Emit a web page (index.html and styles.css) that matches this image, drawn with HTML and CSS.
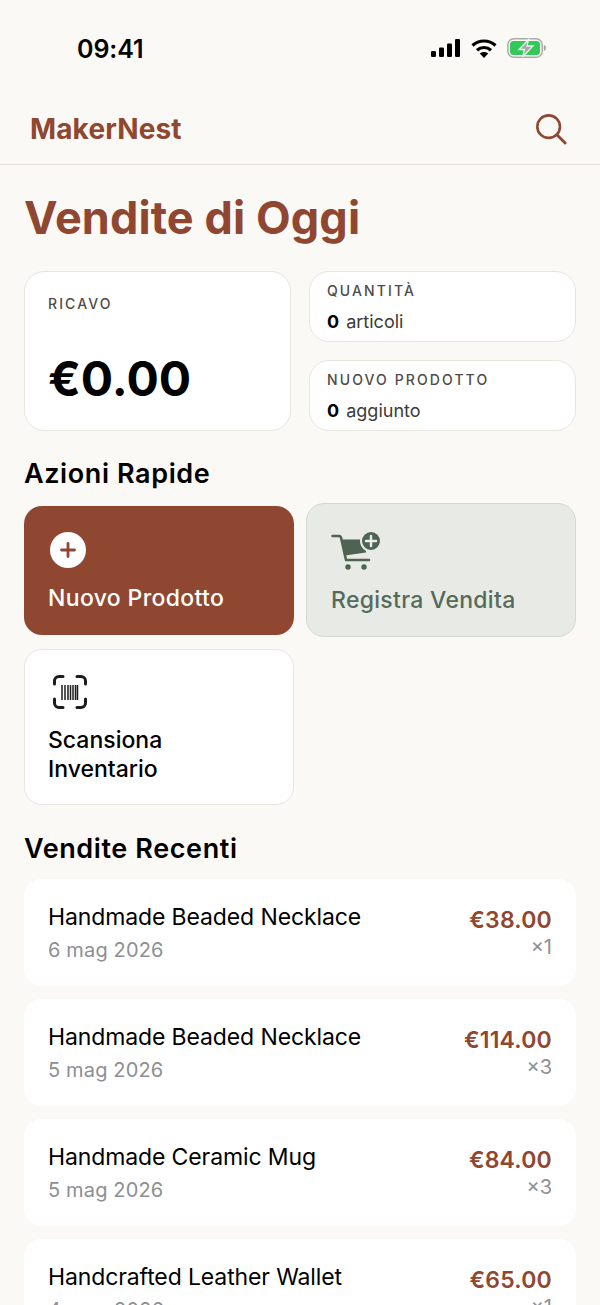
FILE: index.html
```html
<!DOCTYPE html>
<html>
<head>
    <meta charset="UTF-8">
    <title>MakerNest</title>
    <link rel="stylesheet" href="styles.css">
</head>
<body>
    <div class="status-bar">
        <span class="clock">09:41</span>
        <div class="status-icons">
            <svg width="30" height="18" viewBox="0 0 30 18"><rect x="0" y="12" width="5" height="6" rx="1.2"/><rect x="8" y="8.500" width="5" height="9.500" rx="1.2"/><rect x="16" y="4.500" width="5" height="13.500" rx="1.2"/><rect x="24" y="0" width="5" height="18" rx="1.2"/></svg>
            <svg width="26" height="19" viewBox="0 0 26 19"><path d="M1.500 6.500C8 .5 18 .5 24.500 6.500" fill="none" stroke="#000" stroke-width="3.200"/><path d="M6 11.200c4-3.600 10-3.600 14 0" fill="none" stroke="#000" stroke-width="3.200"/><path d="M13 19l-4.200-4.600c2.400-2 6-2 8.400 0z"/></svg>
            <svg width="41" height="20" viewBox="0 0 41 20"><rect x=".8" y=".8" width="34.400" height="18.400" rx="6" fill="none" stroke="#a9aca9" stroke-width="1.500"/><rect x="3" y="3" width="30" height="14" rx="3.500" fill="#34c759"/><path d="M36.800 7v6c1.500-.4 2.400-1.600 2.400-3s-.9-2.600-2.400-3z" fill="#a9aca9"/><path d="M21.500 1.500L12 11.500h5.500L15.500 19 26 8h-6z" fill="#a8a8a8" stroke="#e9f5ea" stroke-width="1.300"/></svg>
        </div>
    </div>

    <header class="nav">
        <span class="brand">MakerNest</span>
        <svg class="search" width="32" height="32" viewBox="0 0 34 34"><circle cx="14.500" cy="14.500" r="12" fill="none" stroke="#8f4731" stroke-width="2.800"/><path d="M23.500 23.500l8.500 8.500" stroke="#8f4731" stroke-width="3" stroke-linecap="round"/></svg>
    </header>

    <main class="content">
        <h1>Vendite di Oggi</h1>

        <section class="stats">
            <div class="card revenue">
                <span class="label">RICAVO</span>
                <span class="amount">€0.00</span>
            </div>
            <div class="stat-side">
                <div class="card mini">
                    <span class="label">QUANTITÀ</span>
                    <span class="mini-value"><b>0</b> articoli</span>
                </div>
                <div class="card mini">
                    <span class="label">NUOVO PRODOTTO</span>
                    <span class="mini-value"><b>0</b> aggiunto</span>
                </div>
            </div>
        </section>

        <h2>Azioni Rapide</h2>
        <section class="actions">
            <div class="action primary">
                <svg width="36" height="36" viewBox="0 0 36 36"><circle cx="18" cy="18" r="18" fill="#fff"/><path d="M18 11.500v13M11.500 18h13" stroke="#8f4731" stroke-width="2.800" stroke-linecap="round"/></svg>
                <span>Nuovo Prodotto</span>
            </div>
            <div class="action muted">
                <svg width="50" height="40" viewBox="0 0 50 40"><path d="M1.500 6H8q1.500 0 2 1.500L15 30h23" fill="none" stroke="#4f6353" stroke-width="2.600" stroke-linecap="round" stroke-linejoin="round"/><path d="M11 9.500h24v13l-21 3z" fill="#4f6353"/><circle cx="17" cy="37" r="2.700" fill="#4f6353"/><circle cx="33" cy="37" r="2.700" fill="#4f6353"/><circle cx="40" cy="11" r="10" fill="#4f6353" stroke="#e7eae5" stroke-width="2"/><path d="M40 6v10M35 11h10" stroke="#e7eae5" stroke-width="2.500" stroke-linecap="round"/></svg>
                <span>Registra Vendita</span>
            </div>
            <div class="action plain">
                <svg width="36" height="36" viewBox="0 0 36 36"><path d="M2.500 10V7A4.500 4.500 0 0 1 7 2.500h4M25 2.500h4A4.500 4.500 0 0 1 33.500 7v3M33.500 25v4a4.500 4.500 0 0 1-4.500 4.500h-4M11 33.500H7A4.500 4.500 0 0 1 2.500 29v-4" fill="none" stroke="#1c1c1e" stroke-width="3" stroke-linecap="round"/><path d="M10 11v15M13 11v15M16 11v15M18.500 11v15M21 11v15M23.500 11v15M25.500 11v15" stroke="#1c1c1e" stroke-width="1.500"/></svg>
                <span>Scansiona<br>Inventario</span>
            </div>
        </section>

        <h2 class="recent-title">Vendite Recenti</h2>
        <section class="sales">
            <div class="sale">
                <div class="sale-info"><span class="sale-name">Handmade Beaded Necklace</span><span class="sale-date">6 mag 2026</span></div>
                <div class="sale-total"><span class="price">€38.00</span><span class="qty">×1</span></div>
            </div>
            <div class="sale">
                <div class="sale-info"><span class="sale-name">Handmade Beaded Necklace</span><span class="sale-date">5 mag 2026</span></div>
                <div class="sale-total"><span class="price">€114.00</span><span class="qty">×3</span></div>
            </div>
            <div class="sale">
                <div class="sale-info"><span class="sale-name">Handmade Ceramic Mug</span><span class="sale-date">5 mag 2026</span></div>
                <div class="sale-total"><span class="price">€84.00</span><span class="qty">×3</span></div>
            </div>
            <div class="sale">
                <div class="sale-info"><span class="sale-name">Handcrafted Leather Wallet</span><span class="sale-date">4 mag 2026</span></div>
                <div class="sale-total"><span class="price">€65.00</span><span class="qty">×1</span></div>
            </div>
        </section>
    </main>
</body>
</html>
```

FILE: styles.css
```css
* {
    margin: 0;
    padding: 0;
    box-sizing: border-box;
}

html, body {
    height: 1305px;
    overflow: hidden;
}

body {
    font-family: Inter, "Liberation Sans", sans-serif;
    background: #fbf9f5;
    color: #000;
}

/* Status bar */
.status-bar {
    height: 99px;
    padding: 34px 52px 0 77px;
    display: flex;
    justify-content: space-between;
    align-items: flex-start;
}

.clock {
    font-size: 25px;
    font-weight: 600;
    line-height: 31px;
    letter-spacing: -0.1px;
}

.status-icons {
    display: flex;
    align-items: center;
    gap: 10px;
    padding-top: 4px;
}

/* Nav */
.nav {
    height: 66px;
    padding: 0 33px 5px 30px;
    display: flex;
    justify-content: space-between;
    align-items: center;
    border-bottom: 1px solid #e2dfd9;
}

.brand {
    font-size: 28px;
    font-weight: 700;
    color: #8f4731;
    letter-spacing: 0.14px;
}

.content {
    padding: 0 24px;
}

h1 {
    font-size: 45px;
    font-weight: 700;
    line-height: 54px;
    color: #8f4731;
    margin-top: 26px;
    letter-spacing: 0.1px;
}

h2 {
    font-size: 27px;
    font-weight: 600;
    line-height: 32px;
    margin-top: 27px;
    letter-spacing: 0.6px;
}

/* Stat cards */
.card {
    background: #fff;
    border: 1px solid #e9e6e0;
    border-radius: 20px;
}

.stats {
    display: grid;
    grid-template-columns: 267px 267px;
    gap: 18px;
    margin-top: 26px;
}

.revenue {
    height: 160px;
    padding: 23px 23px 22px;
    display: flex;
    flex-direction: column;
    justify-content: space-between;
}

.label {
    font-size: 14px;
    font-weight: 500;
    letter-spacing: 2.1px;
    color: #4f4a46;
}

.amount {
    font-size: 48px;
    font-weight: 700;
    line-height: 58px;
}

.stat-side {
    display: flex;
    flex-direction: column;
    gap: 18px;
}

.mini {
    height: 71px;
    padding: 10px 17px;
    display: flex;
    flex-direction: column;
    gap: 12px;
}

.mini-value {
    font-size: 18px;
    color: #3d3a37;
}

.mini-value b {
    color: #000;
    font-weight: 700;
    margin-right: 2px;
}

/* Quick actions */
.actions {
    display: grid;
    grid-template-columns: 270px 270px;
    gap: 12px;
    margin-top: 16px;
}

.action {
    border-radius: 18px;
    height: 129px;
    padding: 26px 24px 0;
    display: flex;
    flex-direction: column;
    align-items: flex-start;
    gap: 16px;
    font-size: 23px;
    font-weight: 500;
    line-height: 29px;
}

.primary {
    background: #8f4731;
    color: #fff;
    letter-spacing: 0.35px;
}

.primary svg {
    margin-left: 2px;
}

.muted {
    background: #e7eae5;
    border: 1px solid #d5d9d0;
    color: #566a5c;
    letter-spacing: 0.3px;
    margin-top: -3px;
    height: 134px;
}

.plain {
    background: #fff;
    border: 1px solid #e9e6e0;
    height: 156px;
    padding: 24px 23px 0;
}

.plain svg {
    margin-left: 4px;
}

.recent-title {
    margin-top: 28px;
}

/* Recent sales */
.sales {
    display: flex;
    flex-direction: column;
    gap: 13px;
    margin-top: 14px;
}

.sale {
    background: #fff;
    border-radius: 18px;
    height: 107px;
    padding: 24px 24px 0;
    display: flex;
    justify-content: space-between;
    align-items: flex-start;
    flex-shrink: 0;
}

.sale-info, .sale-total {
    display: flex;
    flex-direction: column;
}

.sale-total {
    align-items: flex-end;
    padding-top: 2px;
}

.sale-name {
    font-size: 23px;
    line-height: 28px;
    letter-spacing: -0.12px;
}

.sale-date {
    font-size: 20px;
    line-height: 28px;
    margin-top: 5px;
    color: #8e8e93;
    letter-spacing: 0.15px;
}

.price {
    font-size: 23px;
    font-weight: 600;
    line-height: 30px;
    color: #8f4731;
    letter-spacing: 0.2px;
}

.qty {
    font-size: 20px;
    line-height: 24px;
    color: #8e8e93;
}
```
